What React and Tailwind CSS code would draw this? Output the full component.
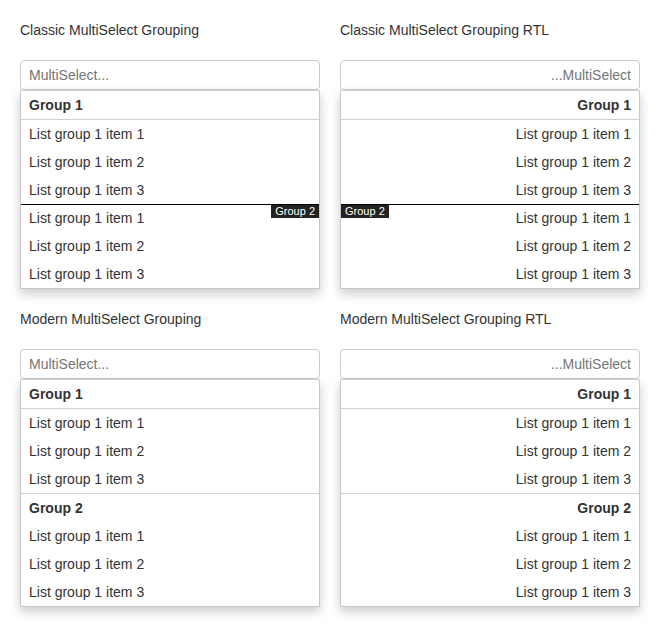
const items = ['List group 1 item 1', 'List group 1 item 2', 'List group 1 item 3'];

const Row = ({ children }) => (
  <div className="h-7 flex items-center px-2">{children}</div>
);

const ClassicList = ({ rtl }) => (
  <div className="border border-[#c8c8c8] border-t-[#d0d0d0] bg-white shadow-[0_5px_10px_rgba(0,0,0,0.2)]">
    <div className="h-[29px] flex items-center px-2 font-bold border-b border-[#d0d0d0]">Group 1</div>
    {items.map((t) => (
      <Row key={t}>{t}</Row>
    ))}
    <div className="relative border-t border-black">
      <div className="h-[27px] flex items-center px-2">{items[0]}</div>
      <span
        className={`absolute top-0 ${rtl ? 'left-0' : 'right-0'} bg-[#222] text-white text-[11px] leading-[13px] px-[4px]`}
      >
        Group 2
      </span>
    </div>
    {items.slice(1).map((t) => (
      <Row key={t}>{t}</Row>
    ))}
  </div>
);

const ModernList = () => (
  <div className="border border-[#c8c8c8] border-t-[#d0d0d0] bg-white shadow-[0_5px_10px_rgba(0,0,0,0.2)]">
    <div className="h-[29px] flex items-center px-2 font-bold border-b border-[#d0d0d0]">Group 1</div>
    {items.map((t) => (
      <Row key={t}>{t}</Row>
    ))}
    <div className="h-[29px] flex items-center px-2 font-bold border-t border-[#d0d0d0]">Group 2</div>
    {items.map((t) => (
      <Row key={'b' + t}>{t}</Row>
    ))}
  </div>
);

const Block = ({ title, rtl, modern }) => (
  <div dir={rtl ? 'rtl' : 'ltr'} className="flex flex-col">
    <div dir="ltr" className="h-5 leading-5">{title}</div>
    <div className="mt-5 h-[30px] border border-[#cccccc] rounded-[4px] flex items-center px-2 text-[#757575]">
      MultiSelect...
    </div>
    {modern ? <ModernList /> : <ClassicList rtl={rtl} />}
  </div>
);

export default function App() {
  return (
    <div
      className="w-[660px] h-[627px] bg-white text-[14px] text-[#333] px-5 pt-5"
      style={{ fontFamily: '"Liberation Sans", Arial, sans-serif' }}
    >
      <div className="grid grid-cols-2 gap-x-5 gap-y-5">
        <Block title="Classic MultiSelect Grouping" />
        <Block title="Classic MultiSelect Grouping RTL" rtl />
        <Block title="Modern MultiSelect Grouping" modern />
        <Block title="Modern MultiSelect Grouping RTL" rtl modern />
      </div>
    </div>
  );
}
